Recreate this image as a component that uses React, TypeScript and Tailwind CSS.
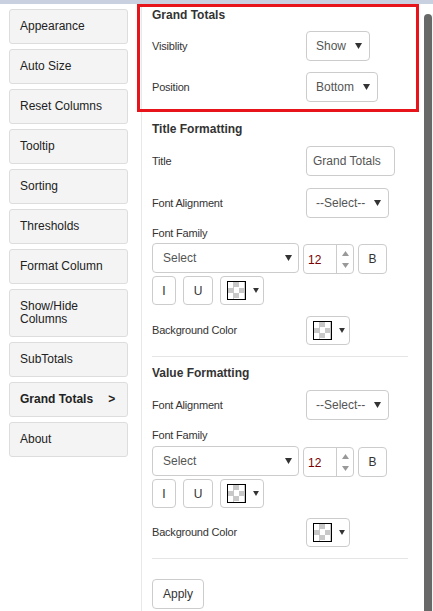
import React from "react";

const navItems = [
  "Appearance",
  "Auto Size",
  "Reset Columns",
  "Tooltip",
  "Sorting",
  "Thresholds",
  "Format Column",
  "Show/Hide Columns",
  "SubTotals",
  "Grand Totals",
  "About",
];

function Caret({ size = 7 }: { size?: number }) {
  return (
    <svg width={size} height={size - 1} viewBox="0 0 7 6" className="shrink-0">
      <polygon points="0,0 7,0 3.5,6" fill="#333" />
    </svg>
  );
}

function SelectBox({ label, width }: { label: string; width: string }) {
  return (
    <div
      className={`flex h-[30px] ${width} items-center justify-between rounded-[4px] border border-[#ccc] bg-white pl-[9px] pr-[7px] text-[12px] text-[#555]`}
    >
      <span>{label}</span>
      <Caret />
    </div>
  );
}

function Swatch() {
  return (
    <span className="block h-[19px] w-[19px] border border-black bg-[conic-gradient(#c8c8c8_25%,#fff_0_50%,#c8c8c8_0_75%,#fff_0)] bg-[length:11px_11px]" />
  );
}

function ColorPicker() {
  return (
    <div className="flex h-[29px] w-[44px] items-center gap-[7px] rounded-[4px] border border-[#ccc] bg-white pl-[6px]">
      <Swatch />
      <Caret size={6} />
    </div>
  );
}

function Row({ label, children }: { label: string; children: React.ReactNode }) {
  return (
    <div className="flex items-center">
      <span className="w-[154px] text-[11px] tracking-[-0.2px] text-[#333]">{label}</span>
      {children}
    </div>
  );
}

function FontControls() {
  return (
    <>
      <div className="flex items-start gap-[4px]">
        <div className="flex h-[30px] w-[147px] items-center justify-between rounded-[4px] border border-[#ccc] bg-white pl-[10px] pr-[6px] text-[12px] text-[#555]">
          <span>Select</span>
          <Caret />
        </div>
        <div className="mt-[1px] flex h-[30px] w-[51px] rounded-[4px] border border-[#ccc] bg-white">
          <span className="flex flex-1 items-center pl-[4px] pt-[2px] text-[12px] text-[#7a0000]">12</span>
          <div className="flex w-[17px] flex-col items-center justify-center gap-[7px] border-l border-[#ccc]">
            <svg width="7" height="5" viewBox="0 0 7 5">
              <polygon points="0,5 7,5 3.5,0" fill="#999" />
            </svg>
            <svg width="7" height="5" viewBox="0 0 7 5">
              <polygon points="0,0 7,0 3.5,5" fill="#999" />
            </svg>
          </div>
        </div>
        <button className="mt-[1px] h-[30px] w-[29px] rounded-[4px] border border-[#ccc] bg-white text-[12px] text-[#333]">
          B
        </button>
      </div>
      <div className="mt-[2px] flex gap-[7px]">
        <button className="h-[29px] w-[24px] rounded-[4px] border border-[#ccc] bg-white text-[12px] text-[#333]">
          I
        </button>
        <button className="h-[29px] w-[30px] rounded-[4px] border border-[#ccc] bg-white text-[12px] text-[#333]">
          U
        </button>
        <ColorPicker />
      </div>
    </>
  );
}

export default function App() {
  return (
    <div className="relative h-[611px] w-[433px] overflow-hidden bg-white font-['Liberation_Sans',Arial,sans-serif]">
      <div className="h-[4px] bg-[#c9d1e1]" />
      <div className="flex h-[607px]">
        <nav className="flex w-[141px] flex-col gap-[5px] pl-[9px] pr-[13px] pt-[5px]">
          {navItems.map((item) => (
            <div
              key={item}
              className="flex items-center rounded-[3px] border border-[#ddd] bg-[#f4f4f4] px-[10px] py-[10px] text-[12px] leading-[13px] text-[#222]"
            >
              {item === "Grand Totals" ? (
                <span className="font-bold">
                  Grand Totals<span className="ml-[15px]">&gt;</span>
                </span>
              ) : (
                item
              )}
            </div>
          ))}
        </nav>

        <main className="w-[283px] border-l border-[#e8e8e8] pl-[10px] pr-[16px]">
          <h2 className="mt-[3px] text-[12px] font-bold leading-[16px] text-[#333]">Grand Totals</h2>
          <div className="mt-[8px]">
            <Row label="Visiblity">
              <SelectBox label="Show" width="w-[64px]" />
            </Row>
          </div>
          <div className="mt-[11px]">
            <Row label="Position">
              <SelectBox label="Bottom" width="w-[72px]" />
            </Row>
          </div>

          <h2 className="mt-[19px] text-[12px] font-bold leading-[16px] text-[#333]">Title Formatting</h2>
          <div className="mt-[9px]">
            <Row label="Title">
              <div className="flex h-[30px] w-[89px] items-center rounded-[4px] border border-[#ccc] bg-white pl-[6px] text-[12px] text-[#555]">
                Grand Totals
              </div>
            </Row>
          </div>
          <div className="mt-[12px]">
            <Row label="Font Alignment">
              <SelectBox label="--Select--" width="w-[83px]" />
            </Row>
          </div>
          <p className="mt-[8px] text-[11px] leading-[14px] tracking-[-0.2px] text-[#333]">Font Family</p>
          <div className="mt-[3px]">
            <FontControls />
          </div>
          <div className="mt-[11px]">
            <Row label="Background Color">
              <ColorPicker />
            </Row>
          </div>
          <hr className="mt-[11px] border-[#e5e5e5]" />

          <h2 className="mt-[8px] text-[12px] font-bold leading-[16px] text-[#333]">Value Formatting</h2>
          <div className="mt-[9px]">
            <Row label="Font Alignment">
              <SelectBox label="--Select--" width="w-[83px]" />
            </Row>
          </div>
          <p className="mt-[8px] text-[11px] leading-[14px] tracking-[-0.2px] text-[#333]">Font Family</p>
          <div className="mt-[4px]">
            <FontControls />
          </div>
          <div className="mt-[10px]">
            <Row label="Background Color">
              <ColorPicker />
            </Row>
          </div>
          <hr className="mt-[11px] border-[#e5e5e5]" />

          <button className="mt-[20px] h-[30px] w-[52px] rounded-[4px] border border-[#ccc] bg-white text-[12px] text-[#333]">
            Apply
          </button>
        </main>

        <div className="flex w-[9px] pt-[10px]">
          <div className="w-[8px] rounded-t-full bg-[#686868]" />
          <div className="w-[1px] bg-[#f4f4f4]" />
        </div>
      </div>

      <div className="absolute left-[137px] top-[4px] h-[108px] w-[282px] border-[3px] border-[#e8141c]" />
    </div>
  );
}
